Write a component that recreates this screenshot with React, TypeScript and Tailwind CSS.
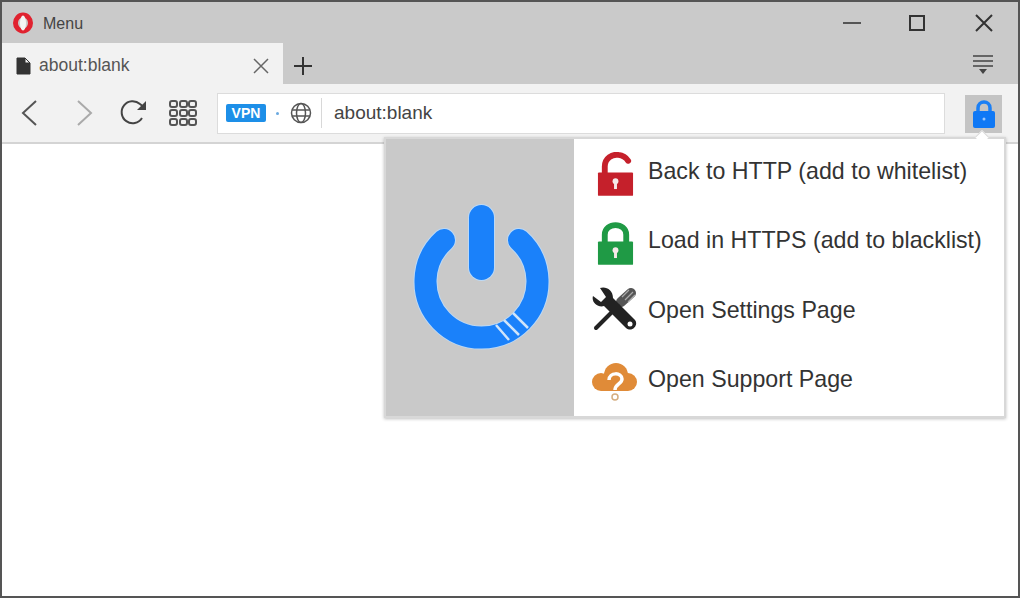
import React from 'react';

const sans = 'font-["Liberation_Sans",Arial,sans-serif]';

const OperaLogo = () => (
    <svg width="22" height="22" viewBox="0 0 22 22">
        <ellipse cx="11" cy="11" rx="7.5" ry="8" fill="none" stroke="#e0222f" strokeWidth="5" />
        <ellipse cx="11" cy="11" rx="3" ry="7.5" fill="#f4f4f4" />
    </svg>
);

const PadLock = ({ color, open, size = 40 }: { color: string; open?: boolean; size?: number }) => (
    <svg className="translate-y-[3px]" width={size} height={size * 1.15} viewBox="0 0 40 46">
        {open ? (
            <path d="M9 24V15C9 6 17 2 23 3C27 3.500 31 6 33 9" fill="none" stroke={color} strokeWidth="6" strokeLinecap="round" />
        ) : (
            <path d="M9 24V14C9 1 31 1 31 14V24" fill="none" stroke={color} strokeWidth="6" />
        )}
        <rect x="2" y="21" width="36" height="24" rx="1" fill={color} />
        <circle cx="20" cy="30" r="3" fill="#f6e9e9" />
        <rect x="18.500" y="30" width="3" height="8" fill="#f6e9e9" />
    </svg>
);

const ToolsIcon = () => (
    <svg width="46" height="46" viewBox="0 0 46 46">
        <path d="M29 15L39 6" stroke="#555" strokeWidth="10" strokeLinecap="round" />
        <path d="M30 10L37 3M33 13L41 5M36 15L43 8" stroke="#aaa" strokeWidth="1.200" />
        <path d="M26 19L4 41" stroke="#222" strokeWidth="4" strokeLinecap="round" />
        <path d="M1 9L9 15L14 10L8 1C14 -1 21 3 21 11L43 33C47 38 40 46 34 41L12 19C6 21 -1 15 1 9Z" fill="#222" />
        <circle cx="38" cy="37" r="2.500" fill="#fff" />
    </svg>
);

const CloudHelp = () => (
    <svg className="translate-y-[4px]" width="46" height="42" viewBox="0 0 46 42">
        <g fill="#e08b38">
            <circle cx="9" cy="19" r="9" />
            <circle cx="24" cy="12" r="12" />
            <circle cx="36" cy="19" r="9" />
            <rect x="9" y="14" width="27" height="14" />
        </g>
        <path d="M17 17C17 9 30 9 30 16C30 21 23 21 23 27" fill="none" stroke="#fff" strokeWidth="3.500" />
        <circle cx="23" cy="34" r="3" fill="#fff" stroke="#d4ad80" strokeWidth="1.500" />
    </svg>
);

const PowerIcon = () => (
    <svg width="140" height="150" viewBox="0 0 140 150">
        <g fill="none" stroke="#bcd9f6" strokeLinecap="round">
            <path d="M31 37A56 56 0 1 0 106 37" strokeWidth="24" />
            <path d="M68.500 14.500V64.500" strokeWidth="27" />
        </g>
        <g fill="none" stroke="#1a81fa" strokeLinecap="round">
            <path d="M31 37A56 56 0 1 0 106 37" strokeWidth="22" />
            <path d="M68.500 14.500V64.500" strokeWidth="25" />
        </g>
        <path d="M83 122L96 137M91 117L106 132M100 110L115 125" stroke="#cfe4fa" strokeWidth="2.500" />
    </svg>
);

const menu = [
    { label: 'Back to HTTP (add to whitelist)', icon: <PadLock color="#c5202b" open size={39} /> },
    { label: 'Load in HTTPS (add to blacklist)', icon: <PadLock color="#1f9a45" size={39} /> },
    { label: 'Open Settings Page', icon: <ToolsIcon /> },
    { label: 'Open Support Page', icon: <CloudHelp /> },
];

export default function App() {
    return (
        <div className={`relative flex h-[598px] w-[1020px] flex-col overflow-hidden border-2 border-[#555] bg-white ${sans}`}>
            <div className="flex h-[41px] items-center bg-[#cacaca] pl-[10px]">
                <OperaLogo />
                <span className="ml-[9px] pt-[3px] text-[16px] text-[#444]">Menu</span>
                <div className="ml-auto flex items-center gap-[49px] pr-[25px] text-[#333]">
                    <svg className="-mr-[2px]" width="18" height="18" viewBox="0 0 18 18"><path d="M0 9H18" stroke="#555" strokeWidth="2" /></svg>
                    <svg width="18" height="18" viewBox="0 0 18 18"><rect x="2" y="2" width="14" height="14" fill="none" stroke="#333" strokeWidth="2" /></svg>
                    <svg width="18" height="18" viewBox="0 0 18 18"><path d="M1 1L17 17M17 1L1 17" stroke="#333" strokeWidth="2" /></svg>
                </div>
            </div>
            <div className="flex h-[41px] bg-[#cacaca]">
                <div className="flex w-[281px] items-center bg-[#f2f2f2] pl-[13px] pr-[14px] pt-[4px]">
                    <svg width="17" height="18" viewBox="0 0 17 18"><path d="M2 1H10L15 6V17H2ZM10 1V6H15" fill="#333" stroke="#333" /></svg>
                    <span className="ml-[7px] text-[17.500px] text-[#555]">about:blank</span>
                    <svg className="ml-auto" width="16" height="16" viewBox="0 0 16 16"><path d="M1 1L15 15M15 1L1 15" stroke="#666" strokeWidth="1.500" /></svg>
                </div>
                <svg className="ml-[10px] mt-[13px]" width="20" height="20" viewBox="0 0 20 20"><path d="M10 1V19M1 10H19" stroke="#333" strokeWidth="2" /></svg>
                <svg className="ml-auto mr-[25px] mt-[12px]" width="20" height="19" viewBox="0 0 20 19">
                    <path d="M0 1H20M0 6H20M0 11H20" stroke="#444" strokeWidth="1.500" />
                    <path d="M6 14H14L10 19Z" fill="#444" />
                </svg>
            </div>
            <div className="flex h-[60px] items-center border-b-2 border-[#d4d4d4] bg-[#f2f2f2] pl-[18px]">
                <svg width="20" height="28" viewBox="0 0 20 28"><path d="M16 2L3 14L16 26" fill="none" stroke="#555" strokeWidth="2" /></svg>
                <svg className="ml-[35px]" width="20" height="28" viewBox="0 0 20 28"><path d="M3 2L16 14L3 26" fill="none" stroke="#aaa" strokeWidth="2" /></svg>
                <svg className="ml-[24px]" width="28" height="28" viewBox="0 0 28 28">
                    <path d="M23 19A11 11 0 1 1 21 5L26 9" fill="none" stroke="#444" strokeWidth="2" />
                    <path d="M27 2V11H18Z" fill="#444" />
                </svg>
                <div className="ml-[22px] grid w-[28px] grid-cols-3 gap-[1px]">
                    {Array.from({ length: 9 }).map((_, i) => (
                        <span key={i} className="h-[8px] w-[9px] rounded-[3px] border-2 border-[#555]" />
                    ))}
                </div>
                <div className="ml-[20px] flex h-[41px] w-[728px] items-center border border-[#dcdcdc] bg-white pl-[8px]">
                    <span className="flex h-[18px] w-[40px] items-center justify-center rounded-[2px] bg-[#1d8fe8] text-[14px] font-bold text-white">VPN</span>
                    <span className="ml-[10px] h-[3px] w-[3px] rounded-full bg-[#6aa9e0]" />
                    <svg className="ml-[11px]" width="22" height="22" viewBox="0 0 22 22" fill="none" stroke="#555" strokeWidth="1.500">
                        <circle cx="11" cy="11" r="9.500" />
                        <ellipse cx="11" cy="11" rx="4.500" ry="9.500" />
                        <path d="M2 8H20M2 14H20" />
                    </svg>
                    <span className="ml-[9px] h-[30px] w-px bg-[#d8d8d8]" />
                    <span className="ml-[12px] pt-[1px] text-[19px] text-[#444]">about:blank</span>
                </div>
                <div className="ml-[20px] mt-[2px] flex h-[38px] w-[37px] items-center justify-center bg-[#c4c4c4]">
                    <svg width="24" height="30" viewBox="0 0 24 30">
                        <path d="M6 14V9C6 1 18 1 18 9V14" fill="none" stroke="#1a7ff5" strokeWidth="3.500" />
                        <rect x="1" y="12" width="22" height="17" rx="2" fill="#0f78f5" />
                        <circle cx="12" cy="20" r="1.500" fill="#9cc7fa" />
                    </svg>
                </div>
            </div>
            <div className="absolute left-[382px] top-[135px] flex h-[281px] w-[622px] border-2 border-[#d8d8d8] bg-white shadow-[0_1px_3px_rgba(0,0,0,0.25)]">
                <div className="flex w-[188px] items-center justify-center bg-[#c9c9c9] pl-[6px]">
                    <PowerIcon />
                </div>
                <ul className="flex flex-1 flex-col gap-[29.500px] pt-[12px]">
                    {menu.map((item) => (
                        <li key={item.label} className="flex h-[40px] shrink-0 items-center">
                            <span className="flex w-[74px] justify-center pl-[9px] pr-[1px]">{item.icon}</span>
                            <span className="text-[23.200px] text-[#333]">{item.label}</span>
                        </li>
                    ))}
                </ul>
            </div>
            <span className="absolute left-[975px] top-[130px] h-[10px] w-[10px] rotate-45 border-l border-t border-[#d8d8d8] bg-white" />
        </div>
    );
}
